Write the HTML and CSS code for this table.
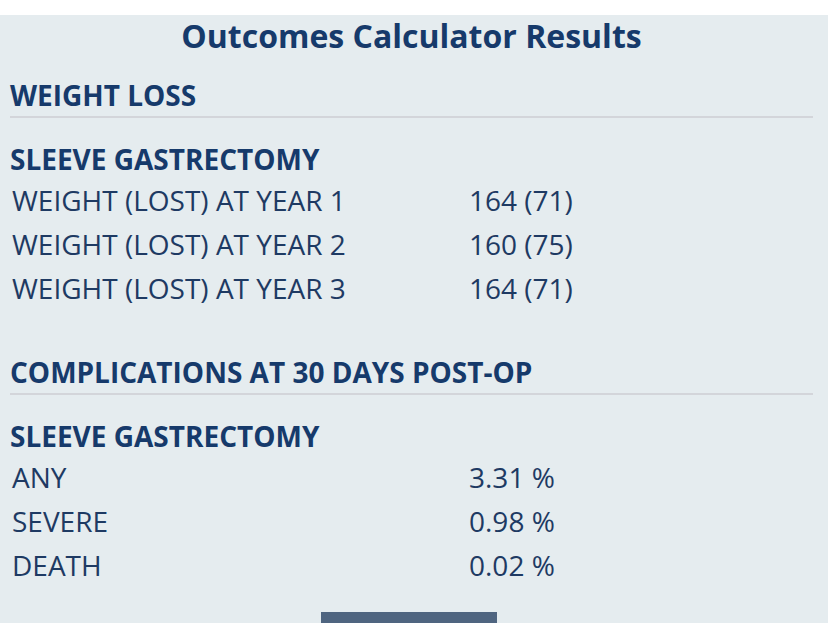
FILE: index.html
```html
<!DOCTYPE html>
<html lang="en">
<head>
<meta charset="utf-8">
<title>Outcomes Calculator Results</title>
<link rel="stylesheet" href="styles.css">
</head>
<body>
<div class="panel">
  <h1 class="title">Outcomes Calculator Results</h1>

  <section class="section">
    <h2 class="section-head">WEIGHT LOSS</h2>
    <h3 class="proc">SLEEVE GASTRECTOMY</h3>
    <div class="rows">
      <div class="label">WEIGHT (LOST) AT YEAR 1</div><div class="value">164 (71)</div>
      <div class="label">WEIGHT (LOST) AT YEAR 2</div><div class="value">160 (75)</div>
      <div class="label">WEIGHT (LOST) AT YEAR 3</div><div class="value">164 (71)</div>
    </div>
  </section>

  <section class="section section-second">
    <h2 class="section-head">COMPLICATIONS AT 30 DAYS POST-OP</h2>
    <h3 class="proc">SLEEVE GASTRECTOMY</h3>
    <div class="rows">
      <div class="label">ANY</div><div class="value">3.31 %</div>
      <div class="label">SEVERE</div><div class="value">0.98 %</div>
      <div class="label">DEATH</div><div class="value">0.02 %</div>
    </div>
  </section>

  <div class="actions">
    <button class="btn" type="button"></button>
  </div>
</div>
</body>
</html>
```
FILE: styles.css
```css
html, body {
  margin: 0;
  padding: 0;
  background: #ffffff;
}
body {
  font-family: "Open Sans", "Liberation Sans", sans-serif;
  color: #1e3a63;
  overflow: hidden;
}
.panel {
  margin-top: 15px;
  background: #e5ecef;
  padding: 0 15px 0 10px;
  min-height: 640px;
}
.title {
  margin: 0;
  font-size: 32px;
  line-height: 42px;
  font-weight: 700;
  text-align: center;
  color: #163a6b;
}
.section-head {
  margin: 17px 0 0;
  font-size: 28px;
  line-height: 42px;
  font-weight: 700;
  color: #163a6b;
  border-bottom: 2px solid #d3d5da;
}
.section-second .section-head {
  margin-top: 41px;
}
.proc {
  margin: 21px 0 0;
  font-size: 28px;
  line-height: 40px;
  font-weight: 700;
  color: #163a6b;
}
.rows {
  display: grid;
  grid-template-columns: 459px 1fr;
  font-size: 28px;
  line-height: 44px;
  margin-top: -1px;
}
.label {
  padding-left: 2px;
}
.actions {
  display: flex;
  justify-content: center;
  margin-top: 25px;
}
.btn {
  width: 176px;
  height: 44px;
  border: 0;
  background: #4f6580;
  margin-left: -6px;
}
```
